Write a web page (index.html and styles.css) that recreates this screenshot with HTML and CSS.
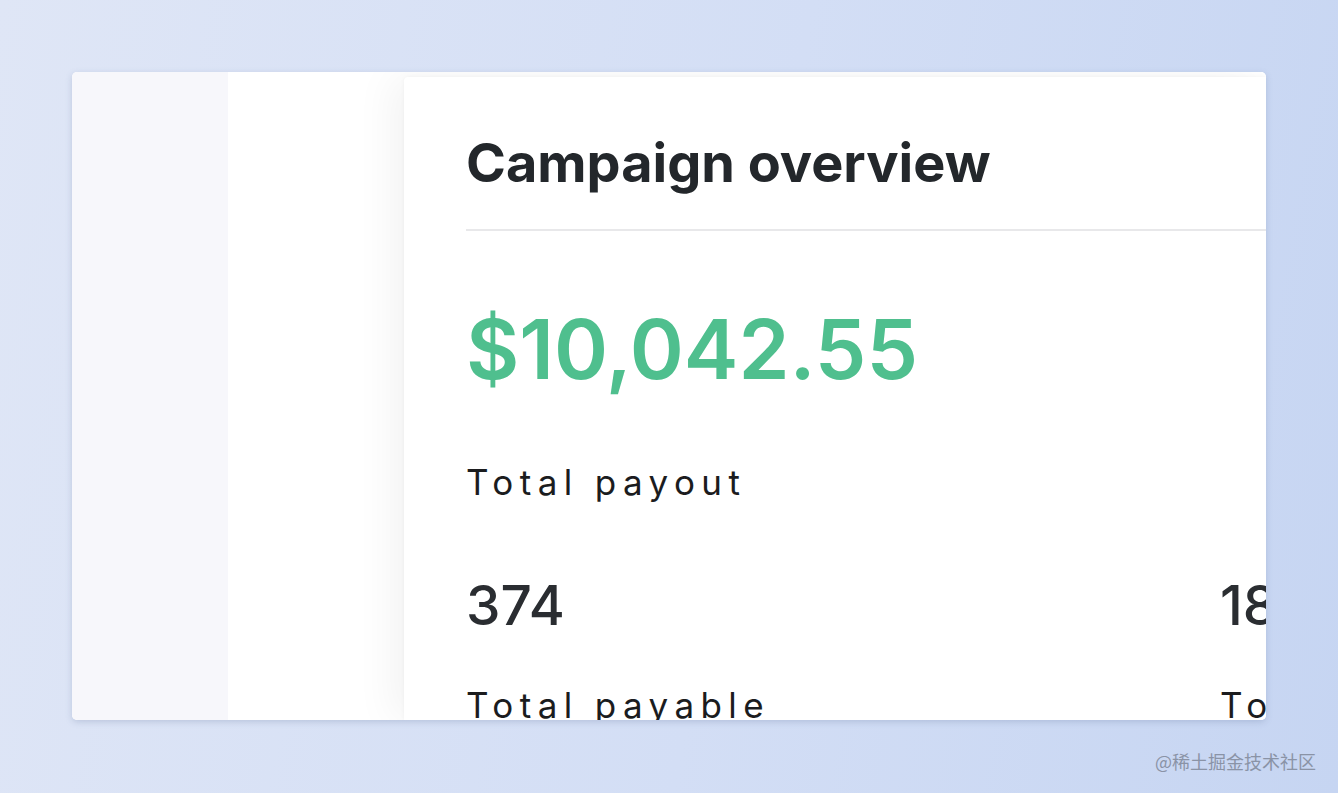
FILE: index.html
```html
<!DOCTYPE html>
<html lang="en">
<head>
<meta charset="utf-8">
<title>Campaign overview</title>
<link rel="stylesheet" href="styles.css">
</head>
<body>
<div class="stage">
  <div class="frame">
    <aside class="sidebar"></aside>
    <main class="main">
      <section class="card">
        <h1 class="title">Campaign overview</h1>
        <div class="divider"></div>
        <div class="amount">$10,042.55</div>
        <div class="label">Total payout</div>
        <div class="stats">
          <div class="stat">
            <div class="stat-value">374</div>
            <div class="label">Total payable</div>
          </div>
          <div class="stat">
            <div class="stat-value">189</div>
            <div class="label">Total paid</div>
          </div>
        </div>
      </section>
    </main>
  </div>
  <div class="watermark">@稀土掘金技术社区</div>
</div>
</body>
</html>
```

FILE: styles.css
```css
html, body {
  margin: 0;
  padding: 0;
}
body {
  width: 1338px;
  height: 793px;
  overflow: hidden;
  background: linear-gradient(100deg, #dfe6f6 0%, #d3def5 55%, #c6d5f2 100%);
  font-family: Inter, "Noto Sans", sans-serif;
}
.stage {
  position: relative;
  padding: 72px 0 0 72px;
  height: 793px;
  box-sizing: border-box;
}
.frame {
  width: 1194px;
  height: 648px;
  border-radius: 5px;
  overflow: hidden;
  display: flex;
  background: #fff;
  box-shadow: 0 2px 6px rgba(90, 110, 150, 0.25);
}
.sidebar {
  width: 156px;
  flex: none;
  background: #f7f7fb;
}
.main {
  flex: 1;
  display: flex;
  padding: 5px 0 0 176px;
  background: #fff;
  min-width: 0;
}
.card {
  flex: 1;
  background: #fff;
  border-top-left-radius: 4px;
  box-shadow: -12px 0 40px rgba(0, 0, 0, 0.05), 0 0 4px rgba(0, 0, 0, 0.04);
  padding: 54px 0 0 62px;
  min-width: 0;
  overflow: hidden;
}
.title {
  margin: 0;
  font-size: 54px;
  font-weight: 700;
  color: #23272b;
  line-height: 64px;
  letter-spacing: 0;
  white-space: nowrap;
}
.divider {
  height: 2px;
  background: #e8e8ea;
  margin-top: 34px;
}
.amount {
  margin-top: 69px;
  font-size: 82px;
  font-weight: 600;
  color: #4fbf8e;
  line-height: 100px;
  white-space: nowrap;
}
.label {
  font-size: 35px;
  color: #1b1c1e;
  letter-spacing: 6.4px;
  line-height: 48px;
  white-space: nowrap;
}
.amount + .label {
  margin-top: 58px;
}
.stats {
  display: grid;
  grid-template-columns: 754px 400px;
  margin-top: 67px;
}
.stat-value {
  font-size: 55px;
  font-weight: 500;
  color: #2a2d31;
  line-height: 64px;
  white-space: nowrap;
}
.stat .label {
  margin-top: 44px;
}
.watermark {
  position: absolute;
  left: 1155px;
  top: 748px;
  font-family: "Noto Sans CJK SC", sans-serif;
  font-size: 18px;
  color: #8a93a6;
  white-space: nowrap;
}
```
